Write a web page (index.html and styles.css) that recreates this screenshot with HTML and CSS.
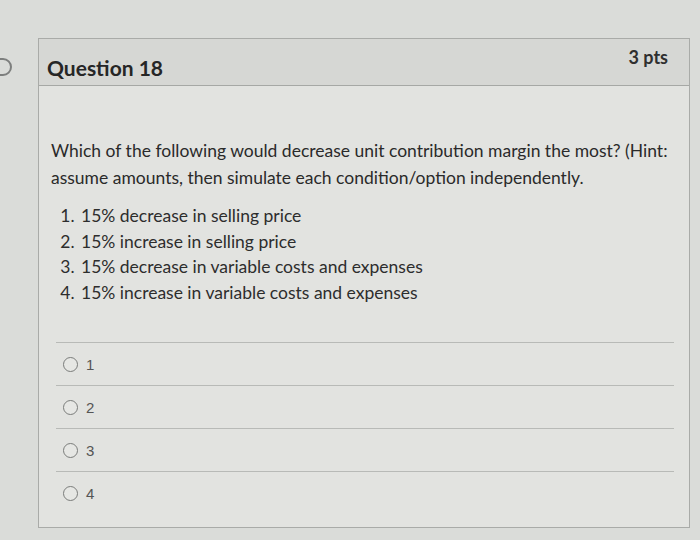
FILE: index.html
```html
<!DOCTYPE html>
<html>
<head>
<meta charset="utf-8">
<link rel="stylesheet" href="styles.css">
</head>
<body>
<div class="page">
  <div class="side-arrow"></div>
  <div class="card">
    <div class="card-header">
      <h2 class="title">Question 18</h2>
      <span class="pts">3 pts</span>
    </div>
    <div class="card-body">
      <p class="question">Which of the following would decrease unit contribution margin the most? (Hint: assume amounts, then simulate each condition/option independently.</p>
      <ol class="options">
        <li>15% decrease in selling price</li>
        <li>15% increase in selling price</li>
        <li>15% decrease in variable costs and expenses</li>
        <li>15% increase in variable costs and expenses</li>
      </ol>
      <div class="answers">
        <label class="answer"><span class="radio"></span><span class="answer-label">1</span></label>
        <label class="answer"><span class="radio"></span><span class="answer-label">2</span></label>
        <label class="answer"><span class="radio"></span><span class="answer-label">3</span></label>
        <label class="answer"><span class="radio"></span><span class="answer-label">4</span></label>
      </div>
    </div>
  </div>
</div>
</body>
</html>
```

FILE: styles.css
```css
html, body {
  margin: 0;
  padding: 0;
  background: #dadcd9;
  width: 700px;
  height: 540px;
  overflow: hidden;
}

.page {
  position: relative;
  width: 700px;
  height: 540px;
  padding: 38px 10px 0 38px;
  box-sizing: border-box;
  font-family: Lato, "Open Sans", sans-serif;
  color: #2b2b2b;
}

.side-arrow {
  position: absolute;
  left: -12px;
  top: 58px;
  width: 24px;
  height: 18px;
  border: 2px solid #7d7f7e;
  border-radius: 0 10px 10px 0;
  box-sizing: border-box;
}

.card {
  border: 1px solid #a9aba8;
  background: #e2e3e0;
  height: 490px;
  box-sizing: border-box;
}

.card-header {
  display: flex;
  justify-content: space-between;
  align-items: flex-start;
  background: #d6d7d4;
  border-bottom: 1px solid #a6a8a5;
  height: 47px;
  box-sizing: border-box;
  padding: 0 21px 0 8px;
}

.title {
  margin: 17px 0 0 0;
  font-size: 21px;
  font-weight: 700;
  line-height: 24px;
  color: #262626;
}

.pts {
  margin-top: 7px;
  font-size: 18px;
  font-weight: 700;
  line-height: 22px;
  color: #2f2f2f;
}

.card-body {
  padding: 51px 15px 0 12px;
}

.question {
  margin: 0;
  font-size: 17.5px;
  line-height: 27px;
  color: #2a2a2a;
}

.options {
  margin: 12px 0 0 0;
  padding-left: 28px;
  font-size: 17.5px;
  line-height: 25.5px;
  color: #2d2d2d;
}

.options li {
  padding-left: 2px;
}

.answers {
  margin: 37px 0 0 5px;
  border-top: 1px solid #b8bab7;
}

.answer {
  display: flex;
  align-items: center;
  gap: 8px;
  height: 43px;
  padding-left: 7px;
  border-bottom: 1px solid #b8bab7;
  box-sizing: border-box;
}

.answer:last-child {
  border-bottom: none;
}

.radio {
  width: 15px;
  height: 15px;
  border: 1.5px solid #7a7c7a;
  border-radius: 50%;
  box-sizing: border-box;
  background: #e6e7e4;
}

.answer-label {
  font-family: "Liberation Sans", Arial, sans-serif;
  font-size: 15px;
  color: #555;
}
```
